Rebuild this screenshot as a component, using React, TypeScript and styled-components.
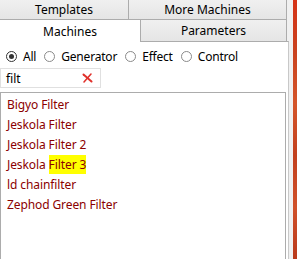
import styled, { createGlobalStyle } from "styled-components";

const GlobalStyle = createGlobalStyle`
  html, body {
    margin: 0;
    padding: 0;
    background: #f0f0f0;
  }
  body {
    font-family: "Noto Sans", "Open Sans", sans-serif;
    font-size: 12px;
  }
`;

const Window = styled.div`
  width: 297px;
  height: 259px;
  display: flex;
  overflow: hidden;
  background: #f0f0f0;
`;

const Main = styled.div`
  width: 289px;
  display: flex;
  flex-direction: column;
`;

const TabRow = styled.div<{ $height: number }>`
  width: 287px;
  height: ${(p) => p.$height}px;
  display: flex;
  flex-shrink: 0;
`;

const Tab = styled.div<{ $width: number; $selected?: boolean; $bottom?: boolean }>`
  width: ${(p) => p.$width}px;
  box-sizing: border-box;
  display: flex;
  align-items: center;
  justify-content: center;
  color: #000;
  border-right: 1px solid #acacac;
  border-bottom: ${(p) => (p.$bottom ? "1px solid #acacac" : "none")};
  background: ${(p) =>
    p.$selected ? "#fff" : "linear-gradient(#f0f0f0, #e5e5e5)"};
  position: relative;
  z-index: ${(p) => (p.$selected ? 1 : 0)};
  height: ${(p) => (p.$selected ? "22px" : "100%")};
  padding-top: ${(p) => (p.$selected ? "1px" : "0")};
`;

const Panel = styled.div`
  flex: 1;
  display: flex;
  flex-direction: column;
  background: #fff;
  border-top: 1px solid #acacac;
  border-right: 1px solid #c8c8c8;
  padding: 7px 2px 0 0;
  min-height: 0;
`;

const RadioRow = styled.div`
  height: 14px;
  display: flex;
  align-items: center;
  gap: 8px;
  padding-left: 6px;
`;

const RadioItem = styled.label`
  display: flex;
  align-items: center;
  gap: 6px;
  color: #000;
  letter-spacing: -0.2px;
`;

const Circle = styled.span<{ $checked?: boolean }>`
  width: 11px;
  height: 11px;
  box-sizing: border-box;
  border-radius: 50%;
  border: 1px solid ${(p) => (p.$checked ? "#333" : "#8a8a8a")};
  display: flex;
  align-items: center;
  justify-content: center;

  &::after {
    content: "";
    width: 5px;
    height: 5px;
    border-radius: 50%;
    background: #333;
    display: ${(p) => (p.$checked ? "block" : "none")};
  }
`;

const SearchBox = styled.div`
  margin-top: 5px;
  width: 101px;
  height: 20px;
  box-sizing: border-box;
  border: 1px solid #e0e0e0;
  display: flex;
  align-items: center;
  justify-content: space-between;
  padding: 0 7px 0 5px;
  color: #000;
`;

const List = styled.div`
  margin-top: 4px;
  flex: 1;
  border: 1px solid #acacac;
  border-bottom: none;
  padding: 2px 0 0 6px;
`;

const Item = styled.div`
  height: 20px;
  line-height: 20px;
  color: #8b0000;
  white-space: nowrap;
  letter-spacing: -0.1px;
`;

const Mark = styled.span`
  display: inline-block;
  background: #ffff00;
  line-height: 19px;
`;

const Gap = styled.div`
  width: 4px;
`;

const Strip = styled.div`
  width: 4px;
  background: linear-gradient(
    #d63418 0%,
    #c9421f 20%,
    #d4552a 40%,
    #c2401e 60%,
    #d0512a 80%,
    #b9391b 100%
  );
`;

const ClearIcon = () => (
  <svg width="11" height="10" viewBox="0 0 11 10">
    <path d="M1.5 1.5 L9.5 8.5" stroke="#e0302a" strokeWidth="2" strokeLinecap="round" />
    <path d="M9 1 L2 9" stroke="#e0302a" strokeWidth="1.5" strokeLinecap="round" />
  </svg>
);

const items = [
  "Bigyo Filter",
  "Jeskola Filter",
  "Jeskola Filter 2",
  "Jeskola Filter 3",
  "ld chainfilter",
  "Zephod Green Filter",
];

export default function App() {
  return (
    <>
      <GlobalStyle />
      <Window>
        <Main>
          <TabRow $height={20}>
            <Tab $width={129} $bottom>Templates</Tab>
            <Tab $width={158} $bottom>More Machines</Tab>
          </TabRow>
          <TabRow $height={21}>
            <Tab $width={141} $selected>Machines</Tab>
            <Tab $width={146}>Parameters</Tab>
          </TabRow>
          <Panel>
            <RadioRow>
              <RadioItem><Circle $checked />All</RadioItem>
              <RadioItem><Circle />Generator</RadioItem>
              <RadioItem><Circle />Effect</RadioItem>
              <RadioItem><Circle />Control</RadioItem>
            </RadioRow>
            <SearchBox>
              <span>filt</span>
              <ClearIcon />
            </SearchBox>
            <List>
              {items.map((name) =>
                name === "Jeskola Filter 3" ? (
                  <Item key={name}>
                    Jeskola <Mark>Filter 3</Mark>
                  </Item>
                ) : (
                  <Item key={name}>{name}</Item>
                )
              )}
            </List>
          </Panel>
        </Main>
        <Gap />
        <Strip />
      </Window>
    </>
  );
}
